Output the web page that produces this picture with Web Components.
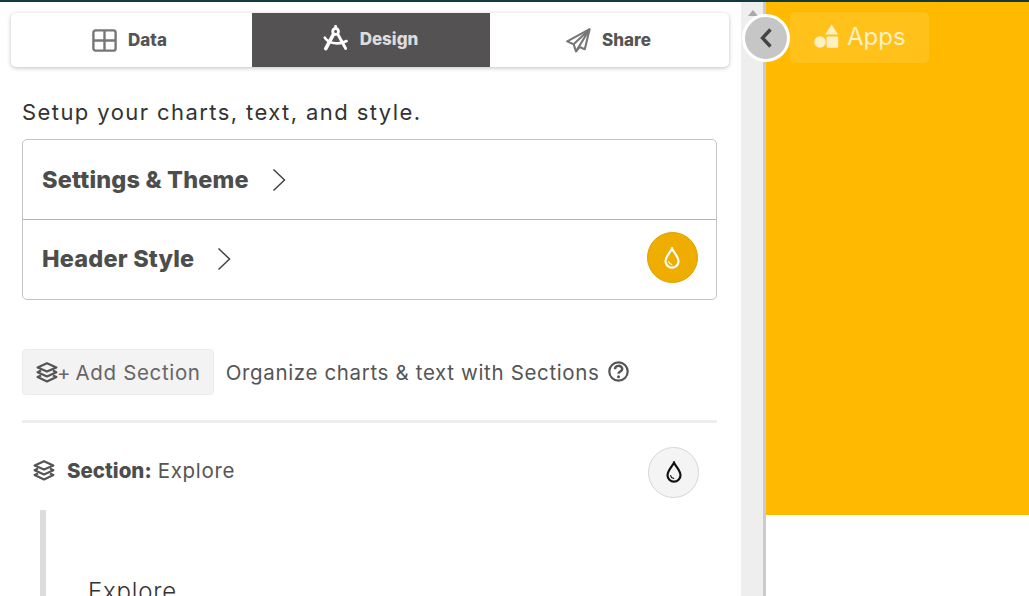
<!DOCTYPE html>
<html lang="en">
<head>
<meta charset="utf-8">
<title>Design panel</title>
<style>
  html, body { margin: 0; height: 596px; overflow: hidden; background: #fff; }
  body { font-family: Inter, "Liberation Sans", sans-serif; }
</style>
</head>
<body>
<editor-shell>
  <design-panel slot="panel">
    <tab-bar></tab-bar>
    <intro-text>Setup your charts, text, and style.</intro-text>
    <settings-card>
      <settings-row label="Settings &amp; Theme"></settings-row>
      <settings-row label="Header Style" swatch="#efad00" divider></settings-row>
    </settings-card>
    <add-section></add-section>
    <section-block name="Explore"></section-block>
  </design-panel>
  <preview-pane slot="preview"></preview-pane>
</editor-shell>

<script>
const ICONS = {
  grid: `<svg width="25" height="23" viewBox="0 0 25 23" fill="none" stroke="#777" stroke-width="2.4"><rect x="1.4" y="1.4" width="22.2" height="20.2" rx="2.2"/><path d="M12.5 1v21M1.5 11.5h22"/></svg>`,
  compass: `<svg width="26" height="26" viewBox="0 0 26 26" fill="none" stroke="#fff" stroke-linecap="round"><circle cx="12.6" cy="6.4" r="2.9" stroke-width="2.8"/><path d="M12.6 1v1" stroke-width="2.6"/><path d="M10.4 9.4 2.8 23.6" stroke-width="3.6"/><path d="M15 9.6 22.6 23.4" stroke-width="3"/><path d="M1.8 12.6c3.2 5.4 13 8 21.8 3.4" stroke-width="2.6"/></svg>`,
  plane: `<svg width="25" height="25" viewBox="0 0 25 25" fill="none" stroke="#777" stroke-width="2.1" stroke-linejoin="round"><path d="M23.6 1.2 1.2 13.4l6.4 2.8L10 23.4l3.6-4.4 5.2 2.2z"/><path d="M23.6 1.2 7.6 16.2M23.6 1.2 10 23.4"/></svg>`,
  layers: `<svg width="22" height="21" viewBox="0 0 22 21" fill="none" stroke="#555" stroke-width="2.2" stroke-linejoin="round"><path d="M11 1.2 20.4 5.4 11 9.6 1.6 5.4z"/><path d="M5 8.6 1.6 10.2 11 14.4l9.4-4.2L17 8.6"/><path d="M5 13.4 1.6 15 11 19.4 20.4 15 17 13.4"/></svg>`,
  help: `<svg width="21" height="21" viewBox="0 0 21 21" fill="none" stroke="#555"><circle cx="10.5" cy="10.5" r="9.2" stroke-width="2.2"/><path d="M7 8.2c0-4.4 7.2-4.4 7.2-.2 0 2.6-3.7 2.4-3.7 4.8" stroke-width="2.5"/><circle cx="10.5" cy="15.8" r="1.5" fill="#555" stroke="none"/></svg>`
}

/**
 * Returns the drop icon in the given colour.
 *
 * @param {string} colour - Stroke colour.
 * @returns {string} The svg markup.
 */
function dropIcon (colour) {
  return `<svg width="16" height="22" viewBox="0 0 16 22" fill="none" stroke="${colour}" stroke-linecap="round"><path d="M8 1.6C6.6 5 1.5 9.6 1.5 14.2a6.5 6.5 0 0 0 13 0C14.5 9.6 9.4 5 8 1.6z" stroke-width="2.2"/><path d="M4.6 14.6c.4 1.6 1.5 2.6 3.1 2.8" stroke-width="1.2"/></svg>`
}

/**
 * Base class, puts the given markup in an open shadow root.
 */
class ShadowElement extends HTMLElement {
  /**
   * Attaches the shadow root.
   *
   * @param {string} html - Styles and markup of the element.
   */
  constructor (html) {
    super()
    const template = document.createElement('template')
    template.innerHTML = html
    this.attachShadow({ mode: 'open' })
      .appendChild(template.content.cloneNode(true))
  }
}

customElements.define('editor-shell',
  class extends ShadowElement {
    constructor () {
      super(`
        <style>
          :host { display: flex; height: 596px; border-top: 2px solid #0e3a40; box-sizing: border-box; }
          .panel { display: block; width: 741px; flex: none; overflow: hidden; }
          .gutter { width: 22px; flex: none; background: #eeeeef; border-right: 3px solid #cbcbcb; }
          .preview { display: block; flex: 1; }
        </style>
        <div class="panel"><slot name="panel"></slot></div>
        <div class="gutter"></div>
        <div class="preview"><slot name="preview"></slot></div>
      `)
    }
  }
)

customElements.define('design-panel',
  class extends ShadowElement {
    constructor () {
      super(`
        <style>
          :host { display: block; padding: 11px 24px 0 22px; height: 583px; overflow: hidden; }
        </style>
        <slot></slot>
      `)
    }
  }
)

customElements.define('tab-bar',
  class extends ShadowElement {
    constructor () {
      super(`
        <style>
          :host {
            display: grid; grid-template-columns: 241px 238px 1fr;
            height: 54px; margin: 0 -12px 0 -11px; background: #fff;
            border-radius: 5px; box-shadow: 0 1px 4px rgba(0,0,0,.25);
            font: 800 17px Inter, "Liberation Sans", sans-serif; color: #555;
          }
          div { display: flex; align-items: center; justify-content: center; gap: 11px; }
          .active { background: #545252; color: #ddd; padding-right: 1px; }
          .first { padding-right: 4px; }
          .active svg { margin-bottom: 4px; }
          .active span { margin-bottom: 2px; }
          .last { padding-right: 2px; }
        </style>
        <div class="first">${ICONS.grid}<span>Data</span></div>
        <div class="active">${ICONS.compass}<span>Design</span></div>
        <div class="last">${ICONS.plane}<span>Share</span></div>
      `)
    }
  }
)

customElements.define('intro-text',
  class extends ShadowElement {
    constructor () {
      super(`
        <style>
          :host { display: block; margin: 31px 0 13px; font: 400 22px/28px Inter, "Liberation Sans", sans-serif; color: #333; letter-spacing: 1.42px; }
        </style>
        <slot></slot>
      `)
    }
  }
)

customElements.define('settings-card',
  class extends ShadowElement {
    constructor () {
      super(`
        <style>
          :host { display: block; border: 1px solid #c4c4c4; border-radius: 5px; margin-bottom: 49px; }
        </style>
        <slot></slot>
      `)
    }
  }
)

customElements.define('settings-row',
  class extends ShadowElement {
    constructor () {
      super(`
        <style>
          :host { display: block; }
          .row {
            display: flex; align-items: center; gap: 23px; height: 79px;
            padding: 0 18px 0 19px;
            font: 800 23.5px Inter, "Liberation Sans", sans-serif; color: #4d4d4d;
          }
          .label { letter-spacing: .18px; }
          :host([divider]) .row { border-top: 1px solid #b5b5b5; }
          :host([divider]) .label { margin-bottom: 2px; }
          :host([divider]) .row > svg { margin-bottom: 2px; }
          svg { flex: none; }
          .dot {
            margin: 0 0 4px auto; width: 49px; height: 49px; border-radius: 50%;
            display: flex; align-items: center; justify-content: center;
            border: 1px solid #dba200;
          }
          .dot svg { margin-right: 1px; }
        </style>
        <div class="row">
          <span class="label"></span>
          <svg width="14" height="24" viewBox="0 0 14 24" fill="none" stroke="#444" stroke-width="1.5"><path d="M1.5 1.5 12.5 12 1.5 22.5"/></svg>
        </div>
      `)
      this.shadowRoot.querySelector('.label').textContent = this.getAttribute('label')
      const swatch = this.getAttribute('swatch')
      if (swatch) {
        const dot = document.createElement('span')
        dot.className = 'dot'
        dot.style.background = swatch
        dot.innerHTML = dropIcon('#fff')
        this.shadowRoot.querySelector('.row').appendChild(dot)
      }
    }
  }
)

customElements.define('add-section',
  class extends ShadowElement {
    constructor () {
      super(`
        <style>
          :host {
            display: flex; align-items: center; gap: 12px; height: 46px;
            padding-bottom: 25px; border-bottom: 3px solid #eee;
            font: 400 20.5px Inter, "Liberation Sans", sans-serif; color: #555;
            letter-spacing: .65px;
          }
          .btn {
            display: flex; align-items: center; height: 44px; padding: 0 12px 0 13px;
            background: #f3f3f3; border: 1px solid #ececec; border-radius: 4px;
            color: #666;
          }
          .plus { margin-right: 5px; letter-spacing: 0; margin-left: -1px; }
          .hint { display: flex; align-items: center; gap: 8px; }
          .hint svg { margin-bottom: 2px; }
        </style>
        <div class="btn">${ICONS.layers}<span class="plus">+</span><span>Add Section</span></div>
        <div class="hint"><span>Organize charts &amp; text with Sections</span>${ICONS.help}</div>
      `)
    }
  }
)

customElements.define('section-block',
  class extends ShadowElement {
    constructor () {
      super(`
        <style>
          :host { display: block; font: 400 20.5px Inter, "Liberation Sans", sans-serif; color: #555; letter-spacing: .7px; }
          .head { display: flex; align-items: center; height: 52px; padding: 21px 18px 14px 11px; }
          .head > svg { margin-right: 12px; }
          b { font-weight: 800; margin-right: 6px; color: #4d4d4d; letter-spacing: 0; }
          .dot {
            margin: 4px 0 0 auto; width: 49px; height: 49px; border-radius: 50%;
            display: flex; align-items: center; justify-content: center;
            background: #f4f4f4; border: 1px solid #d6d6d6;
          }
          .body { border-left: 6px solid #dcdcdc; margin-left: 18px; padding: 67px 0 0 42px; height: 100px; }
          .title { font: 300 24px/30px Inter, "Liberation Sans", sans-serif; color: #333; letter-spacing: .8px; }
        </style>
        <div class="head">
          ${ICONS.layers}
          <b>Section:</b><span class="name"></span>
          <span class="dot">${dropIcon('#111')}</span>
        </div>
        <div class="body"><div class="title"></div></div>
      `)
      const name = this.getAttribute('name')
      this.shadowRoot.querySelector('.name').textContent = name
      this.shadowRoot.querySelector('.title').textContent = name
    }
  }
)

customElements.define('preview-pane',
  class extends ShadowElement {
    constructor () {
      super(`
        <style>
          :host { display: block; position: relative; height: 594px; background: #fff; }
          .banner { height: 513px; background: #ffba00; padding: 10px 0 0 24px; box-sizing: border-box; }
          .apps {
            display: flex; align-items: center; gap: 8px; width: 139px; height: 51px;
            padding: 0 0 2px 24px; box-sizing: border-box; border-radius: 5px;
            background: rgba(255,255,255,.1); color: #fff0c4;
            font: 400 24px Inter, "Liberation Sans", sans-serif;
          }
          .toggle {
            position: absolute; left: -24px; top: 12px; width: 48px; height: 48px;
            box-sizing: border-box; border-radius: 50%; background: #c6c6c6; border: 3px solid #fff;
            display: flex; align-items: center; justify-content: center;
          }
          .notch {
            position: absolute; left: -18px; top: 8px; width: 0; height: 0;
            border: 5px solid transparent; border-top: 0; border-bottom: 6px solid #a8a8a8;
          }
        </style>
        <div class="banner">
          <div class="apps">
            <svg width="25" height="25" viewBox="0 0 25 25" fill="#fff0c4"><circle cx="6" cy="18" r="5.8"/><path d="M17.6 .6 24 10.6H11.2z"/><rect x="12.6" y="12.4" width="11.6" height="11.4" rx="1"/></svg>
            <span>Apps</span>
          </div>
        </div>
        <div class="notch"></div>
        <div class="toggle">
          <svg width="14" height="22" viewBox="0 0 14 22" fill="none" stroke="#444" stroke-width="3.4"><path d="M11.5 2.5 3.5 11l8 8.5"/></svg>
        </div>
      `)
    }
  }
)
</script>
</body>
</html>
